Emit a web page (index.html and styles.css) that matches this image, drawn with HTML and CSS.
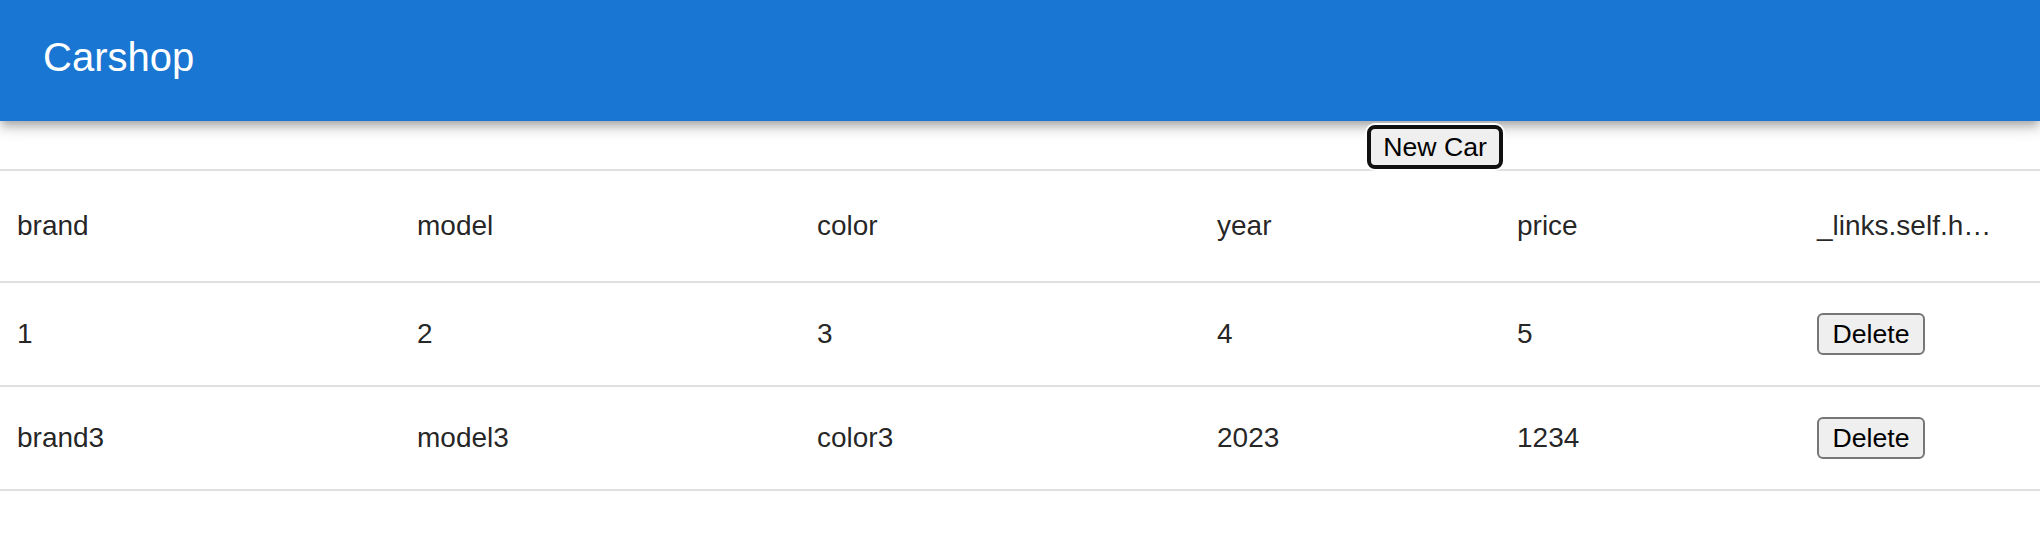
FILE: index.html
```html
<!DOCTYPE html>
<html>
<head>
<meta charset="utf-8">
<title>Carshop</title>
<link rel="stylesheet" href="styles.css">
</head>
<body>
<header class="appbar">
  <h1 class="title">Carshop</h1>
</header>
<div class="toolbar">
  <button class="btn btn-focus" type="button">New Car</button>
</div>
<div class="grid">
  <div class="row head">
    <div class="cell c1">brand</div>
    <div class="cell c2">model</div>
    <div class="cell c3">color</div>
    <div class="cell c4">year</div>
    <div class="cell c5">price</div>
    <div class="cell c6">_links.self.h…</div>
  </div>
  <div class="row">
    <div class="cell c1">1</div>
    <div class="cell c2">2</div>
    <div class="cell c3">3</div>
    <div class="cell c4">4</div>
    <div class="cell c5">5</div>
    <div class="cell c6"><button class="btn btn-del" type="button">Delete</button></div>
  </div>
  <div class="row">
    <div class="cell c1">brand3</div>
    <div class="cell c2">model3</div>
    <div class="cell c3">color3</div>
    <div class="cell c4">2023</div>
    <div class="cell c5">1234</div>
    <div class="cell c6"><button class="btn btn-del" type="button">Delete</button></div>
  </div>
</div>
</body>
</html>
```

FILE: styles.css
```css
html, body {
  margin: 0;
  padding: 0;
  background: #ffffff;
  overflow: hidden;
}
body {
  width: 2040px;
  font-family: "Liberation Sans", Arial, sans-serif;
  color: rgba(0, 0, 0, 0.87);
}
.appbar {
  position: relative;
  z-index: 2;
  height: 121px;
  box-sizing: border-box;
  padding: 25px 0 32px 43px;
  background: #1976d2;
  box-shadow: 0 4px 8px -2px rgba(0,0,0,0.2), 0 8px 10px 0 rgba(0,0,0,0.14), 0 2px 20px 0 rgba(0,0,0,0.12);
}
.title {
  margin: 0;
  font-size: 40px;
  line-height: 64px;
  font-weight: 400;
  color: #ffffff;
}
.toolbar {
  height: 48px;
  box-sizing: border-box;
  padding: 4px 0 0 1367px;
  position: relative;
  z-index: 3;
}
.btn {
  font-family: "Liberation Sans", Arial, sans-serif;
  font-size: 26.67px;
  color: #000000;
  background: #efefef;
  margin: 0;
  cursor: default;
  white-space: nowrap;
}
.btn-focus {
  display: block;
  width: 136px;
  height: 44px;
  box-sizing: border-box;
  padding: 0;
  line-height: 34px;
  border: 4px solid #101010;
  border-radius: 8px;
  box-shadow: 0 0 0 2px #ffffff;
}
.btn-del {
  display: block;
  width: 108px;
  height: 42px;
  box-sizing: border-box;
  padding: 0;
  line-height: 36px;
  border: 2px solid #767676;
  border-radius: 6px;
}
.grid {
  border-top: 2px solid #e0e0e0;
}
.row {
  display: flex;
  height: 104px;
  box-sizing: border-box;
  border-bottom: 2px solid #e0e0e0;
}
.row.head {
  height: 112px;
}
.cell {
  display: flex;
  align-items: center;
  box-sizing: border-box;
  padding: 0 17px;
  font-size: 28px;
  white-space: nowrap;
  overflow: hidden;
}
.c1, .c2, .c3 { width: 400px; }
.c4, .c5 { width: 300px; }
.c6 { flex: 1; min-width: 0; }
```
